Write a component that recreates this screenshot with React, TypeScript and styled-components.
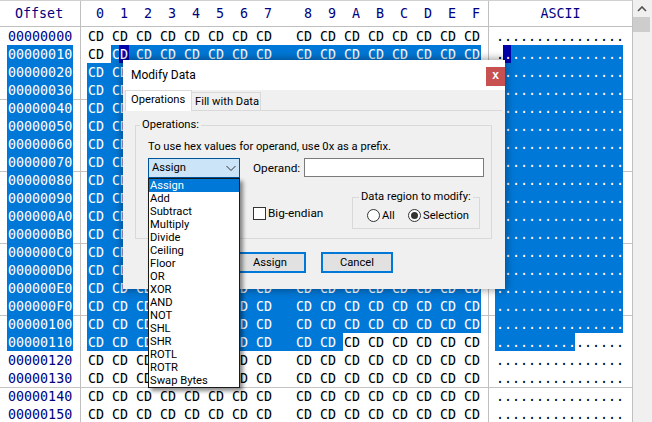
import React from "react";
import styled, { createGlobalStyle } from "styled-components";

const GlobalStyle = createGlobalStyle`
  html, body {
    margin: 0;
    padding: 0;
    background: #fff;
    overflow: hidden;
  }
`;

const HEX = "0123456789ABCDEF".split("");
const OPS = [
  "Assign", "Add", "Subtract", "Multiply", "Divide", "Ceiling", "Floor", "OR",
  "XOR", "AND", "NOT", "SHL", "SHR", "ROTL", "ROTR", "Swap Bytes",
];
const ROW_COUNT = 22;
const SEL_START = 17; // offset 0x11
const SEL_END = 17 * 16 + 9; // offset 0x119

const Page = styled.div`
  position: relative;
  width: 652px;
  height: 422px;
  overflow: hidden;
  display: flex;
  background: #fff;
`;

const Grid = styled.div`
  width: 632px;
  height: 421px;
  border-top: 1px solid #d0d0d0;
  border-right: 1px solid #c0c0c0;
  box-sizing: content-box;
  font-family: "DejaVu Sans Mono", monospace;
  font-size: 13.33px;
  overflow: hidden;
`;

const Row = styled.div<{ $sep?: boolean; $head?: boolean }>`
  display: flex;
  box-sizing: border-box;
  height: ${(p) => (p.$head ? 26 : 18)}px;
  line-height: ${(p) => (p.$head ? 26 : 19)}px;
  border-bottom: ${(p) => (p.$head ? "1px solid #c0c0c0" : "0")};
  color: ${(p) => (p.$head ? "#000080" : "#000")};
  box-shadow: ${(p) => (p.$sep ? "inset 0 1px 0 #c4c4c4" : "none")};
`;

const OffsetCol = styled.div`
  width: 81px;
  padding-left: 7px;
  box-sizing: border-box;
  border-right: 1px solid #c0c0c0;
  flex: none;
`;

const OffsetText = styled.span<{ $sel?: boolean }>`
  display: block;
  width: 66px;
  height: 18px;
  padding-left: 1px;
  box-sizing: border-box;
  color: ${(p) => (p.$sel ? "#fff" : "#000080")};
  background: ${(p) => (p.$sel ? "#0078d7" : "transparent")};
`;

const HexCol = styled.div`
  width: 408px;
  padding-left: 6px;
  box-sizing: border-box;
  border-right: 1px solid #c0c0c0;
  display: flex;
  flex: none;
`;

const Cell = styled.span<{ $sel?: boolean; $idx: number }>`
  flex: none;
  padding-left: 1px;
  box-sizing: border-box;
  white-space: pre;
  width: ${(p) => (p.$idx === 7 ? 40 : p.$idx === 15 ? 18 : 24)}px;
  color: ${(p) => (p.$sel ? "#fff" : "inherit")};
  background: ${(p) => (p.$sel ? "#0078d7" : "transparent")};
`;

const Caret = styled.span`
  display: inline-block;
  width: 10px;
  height: 18px;
  margin-left: -1px;
  padding-left: 1px;
  box-sizing: border-box;
  vertical-align: top;
  background: #0000a8;
  color: #fff;
`;

const AsciiCol = styled.div<{ $head?: boolean }>`
  flex: 1;
  padding-left: ${(p) => (p.$head ? 0 : 6)}px;
  display: flex;
  justify-content: ${(p) => (p.$head ? "center" : "flex-start")};
`;

const AsciiChar = styled.span<{ $sel?: boolean; $caret?: boolean }>`
  flex: none;
  width: ${(p) => (p.$caret ? 10 : 8)}px;
  margin-right: ${(p) => (p.$caret ? -2 : 0)}px;
  padding-left: 1px;
  box-sizing: border-box;
  color: ${(p) => (p.$sel || p.$caret ? "#fff" : "#000")};
  background: ${(p) => (p.$caret ? "#0000a8" : p.$sel ? "#0078d7" : "transparent")};
`;

const Scrollbar = styled.div`
  flex: 1;
  background: #f0f0f0;
  display: flex;
  flex-direction: column;
  align-items: stretch;
`;

const ScrollUp = styled.div`
  height: 17px;
  display: flex;
  align-items: center;
  justify-content: center;
  padding-right: 2px;
`;

const ScrollThumb = styled.div`
  height: 15px;
  margin-right: 2px;
  background: #cdcdcd;
`;

/* dialog floats over the grid */
const Dialog = styled.div`
  position: absolute;
  left: 123px;
  top: 60px;
  width: 382px;
  height: 229px;
  background: #f0f0f0;
  box-shadow: 0 0 8px 1px rgba(0, 0, 0, 0.4);
  font-family: Roboto, sans-serif;
  font-size: 11.2px;
  color: #000;
  display: flex;
  flex-direction: column;
`;

const TitleBar = styled.div`
  height: 30px;
  flex: none;
  background: #fff;
  display: flex;
  align-items: center;
  justify-content: space-between;
  padding-left: 8px;
  font-size: 12px;
`;

const CloseBtn = styled.div`
  width: 19px;
  height: 19px;
  margin-top: 2px;
  background: #c75050;
  color: #fff;
  font: bold 12px/17px "Liberation Sans", sans-serif;
  text-align: center;
`;

const TabStrip = styled.div`
  height: 20px;
  flex: none;
  margin-left: 2px;
  margin-right: 3px;
  display: flex;
  align-items: flex-end;
  border-bottom: 1px solid #d9d9d9;
`;

const Tab = styled.div<{ $active?: boolean }>`
  box-sizing: border-box;
  white-space: nowrap;
  height: ${(p) => (p.$active ? 21 : 18)}px;
  margin-bottom: ${(p) => (p.$active ? -1 : 0)}px;
  width: ${(p) => (p.$active ? 67 : 69)}px;
  padding-left: ${(p) => (p.$active ? 5 : 3)}px;
  line-height: ${(p) => (p.$active ? 18 : 17)}px;
  background: ${(p) => (p.$active ? "#fff" : "#f0f0f0")};
  border: 1px solid #d9d9d9;
  border-bottom: 0;
  border-left-width: ${(p) => (p.$active ? 1 : 0)}px;
`;

const TabBody = styled.div`
  padding: 7px 13px 0 12px;
`;

const GroupBox = styled.fieldset`
  margin: 0;
  padding: 0 0 0 12px;
  height: 121px;
  box-sizing: border-box;
  border: 1px solid #d9d9d9;
  min-width: 0;
`;

const GroupLegend = styled.legend`
  margin-left: -8px;
  padding: 0 2px;
  line-height: 14px;
`;

const Hint = styled.div`
  margin-top: 7px;
  line-height: 15px;
`;

const FieldRow = styled.div`
  display: flex;
  align-items: center;
  height: 20px;
  margin-top: 4px;
`;

const SelectWrap = styled.div`
  position: relative;
  width: 92px;
  height: 20px;
  flex: none;
`;

const SelectBox = styled.div`
  box-sizing: border-box;
  height: 20px;
  border: 1px solid #005499;
  background: #cce4f7;
  padding-left: 3px;
  line-height: 18px;
  display: flex;
  justify-content: space-between;
  align-items: center;
`;

const DropList = styled.div`
  position: absolute;
  left: 0;
  top: 20px;
  width: 92px;
  box-sizing: border-box;
  border: 1px solid #1a1a1a;
  background: #fff;
  box-shadow: 3px 3px 4px rgba(0, 0, 0, 0.45);
  z-index: 5;
`;

const DropItem = styled.div<{ $active?: boolean }>`
  height: 13px;
  line-height: 13px;
  padding-left: 1px;
  background: ${(p) => (p.$active ? "#0078d7" : "#fff")};
  color: ${(p) => (p.$active ? "#fff" : "#000")};
`;

const FieldLabel = styled.span`
  margin-left: 13px;
  width: 51px;
  flex: none;
  font-size: 11.8px;
`;

const TextInput = styled.div`
  width: 180px;
  height: 19px;
  box-sizing: border-box;
  border: 1px solid #7a7a7a;
  background: #fff;
  margin-top: -2px;
`;

const OptionsRow = styled.div`
  display: flex;
  justify-content: space-between;
  padding-left: 105px;
  padding-right: 11px;
`;

const CheckLabel = styled.div`
  display: flex;
  align-items: center;
  gap: 2px;
  margin-top: 28px;
  height: 14px;
  font-size: 11.8px;
`;

const CheckBox = styled.span`
  width: 13px;
  height: 13px;
  box-sizing: border-box;
  border: 1px solid #333;
  background: #fff;
`;

const RegionBox = styled.fieldset`
  margin: 12px 0 0;
  padding: 0 0 0 14px;
  width: 128px;
  height: 39px;
  box-sizing: border-box;
  border: 1px solid #d9d9d9;
  min-width: 0;
  display: flex;
`;

const RegionLegend = styled.legend`
  margin-left: -8px;
  padding: 0 2px;
  line-height: 14px;
  white-space: nowrap;
`;

const RadioRow = styled.div`
  display: flex;
  align-items: center;
  height: 20px;
  margin-top: 1px;
`;

const RadioDot = styled.span<{ $on?: boolean }>`
  width: 13px;
  height: 13px;
  box-sizing: border-box;
  border: 1px solid #333;
  border-radius: 50%;
  background: #fff;
  display: flex;
  align-items: center;
  justify-content: center;
  margin-right: 2px;
  &::after {
    content: "";
    width: 7px;
    height: 7px;
    border-radius: 50%;
    background: ${(p) => (p.$on ? "#333" : "transparent")};
  }
`;

const RadioText = styled.span<{ $wide?: boolean }>`
  width: ${(p) => (p.$wide ? 45 : 26)}px;
`;

const ButtonRow = styled.div`
  display: flex;
  justify-content: flex-end;
  gap: 15px;
  margin-top: 13px;
  padding-right: 99px;
`;

const Button = styled.div`
  width: 72px;
  height: 21px;
  box-sizing: border-box;
  border: 2px solid #0078d7;
  background: #e1e1e1;
  text-align: center;
  line-height: 17px;
`;

function HexRow({ index }: { index: number }) {
  const rowStart = index * 16;
  const offset = rowStart.toString(16).toUpperCase().padStart(8, "0");
  const offsetSel = rowStart + 15 >= SEL_START && rowStart <= SEL_END;
  const bytes = Array.from({ length: 16 }, (_, i) => rowStart + i);
  return (
    <Row $sep={index % 4 === 0 && index > 0}>
      <OffsetCol>
        <OffsetText $sel={offsetSel}>{offset}</OffsetText>
      </OffsetCol>
      <HexCol>
        {bytes.map((b, i) => (
          <Cell key={b} $idx={i} $sel={b >= SEL_START && b <= SEL_END}>
            {b === SEL_START ? (
              <>
                C<Caret>D</Caret>
              </>
            ) : (
              "CD"
            )}
          </Cell>
        ))}
      </HexCol>
      <AsciiCol>
        {bytes.map((b) => (
          <AsciiChar
            key={b}
            $sel={b >= SEL_START && b <= SEL_END}
            $caret={b === SEL_START}
          >
            .
          </AsciiChar>
        ))}
      </AsciiCol>
    </Row>
  );
}

export default function App() {
  return (
    <Page>
      <GlobalStyle />
      <Grid>
        <Row $head>
          <OffsetCol>&nbsp;Offset</OffsetCol>
          <HexCol>
            {HEX.map((h, i) => (
              <Cell key={h} $idx={i}>
                {" " + h}
              </Cell>
            ))}
          </HexCol>
          <AsciiCol $head>ASCII</AsciiCol>
        </Row>
        {Array.from({ length: ROW_COUNT }, (_, i) => (
          <HexRow key={i} index={i} />
        ))}
      </Grid>
      <Scrollbar>
        <ScrollUp>
          <svg width="10" height="6" viewBox="0 0 10 6">
            <path d="M1 5 L5 1 L9 5" fill="none" stroke="#505050" strokeWidth="1.6" />
          </svg>
        </ScrollUp>
        <ScrollThumb />
      </Scrollbar>

      <Dialog>
        <TitleBar>
          Modify Data
          <CloseBtn>x</CloseBtn>
        </TitleBar>
        <TabStrip>
          <Tab $active>Operations</Tab>
          <Tab>Fill with Data</Tab>
        </TabStrip>
        <TabBody>
          <GroupBox>
            <GroupLegend>Operations:</GroupLegend>
            <Hint>To use hex values for operand, use 0x as a prefix.</Hint>
            <FieldRow>
              <SelectWrap>
                <SelectBox>
                  Assign
                  <svg width="20" height="10" viewBox="0 0 20 10">
                    <path d="M7.5 3 L12 7.5 L16.5 3" fill="none" stroke="#333" strokeWidth="1" />
                  </svg>
                </SelectBox>
                <DropList>
                  {OPS.map((op, i) => (
                    <DropItem key={op} $active={i === 0}>
                      {op}
                    </DropItem>
                  ))}
                </DropList>
              </SelectWrap>
              <FieldLabel>Operand:</FieldLabel>
              <TextInput />
            </FieldRow>
            <OptionsRow>
              <CheckLabel>
                <CheckBox />
                Big-endian
              </CheckLabel>
              <RegionBox>
                <RegionLegend>Data region to modify:</RegionLegend>
                <RadioRow>
                  <RadioDot />
                  <RadioText>All</RadioText>
                  <RadioDot $on />
                  <RadioText $wide>Selection</RadioText>
                </RadioRow>
              </RegionBox>
            </OptionsRow>
          </GroupBox>
          <ButtonRow>
            <Button>Assign</Button>
            <Button>Cancel</Button>
          </ButtonRow>
        </TabBody>
      </Dialog>
    </Page>
  );
}
